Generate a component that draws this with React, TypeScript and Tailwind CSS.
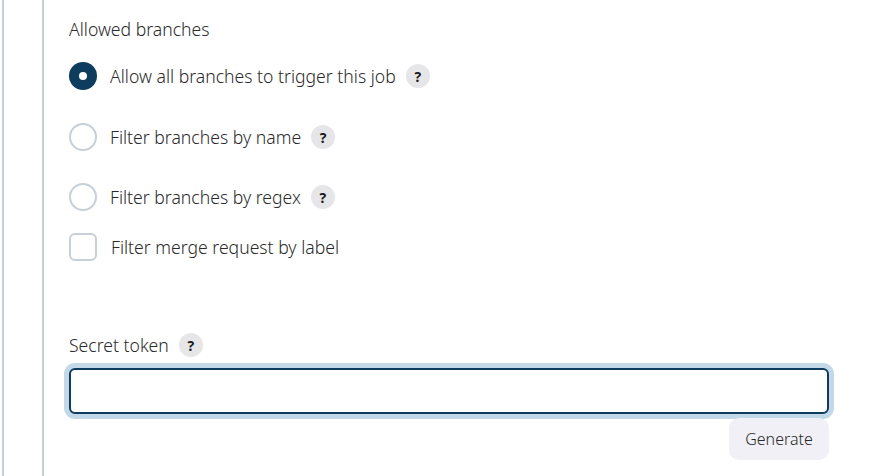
function Help() {
  return (
    <span className="ml-[10px] inline-flex h-[24px] w-[24px] items-center justify-center rounded-full bg-[#e6e6e8] text-[14px] font-bold text-[#1a1a1a]">
      ?
    </span>
  );
}

function Radio({ label, checked, help }: { label: string; checked?: boolean; help?: boolean }) {
  return (
    <div className="flex h-[28px] items-center">
      {checked ? (
        <span className="flex h-[28px] w-[28px] items-center justify-center rounded-full bg-[#0e3c5e]">
          <span className="h-[8px] w-[8px] rounded-full bg-white" />
        </span>
      ) : (
        <span className="h-[28px] w-[28px] rounded-full border-2 border-[#c7d0d6] bg-white" />
      )}
      <span className="ml-[13px]">{label}</span>
      {help && <Help />}
    </div>
  );
}

export default function App() {
  return (
    <div className="flex h-[476px] w-[869px] overflow-hidden bg-white font-['Noto_Sans',sans-serif] text-[17.6px] font-light text-[#2a2a2a]">
      <div className="ml-[2px] w-[2px] bg-[#c8cfd4]" />
      <div className="ml-[38px] w-[2px] bg-[#c8cfd4]" />
      <div className="ml-[25px] flex w-[765px] flex-col pt-[17px]">
        <div className="leading-[24px]">Allowed branches</div>
        <div className="mt-[21px] flex flex-col">
          <Radio label="Allow all branches to trigger this job" checked help />
          <div className="h-[33px]" />
          <Radio label="Filter branches by name" help />
          <div className="h-[32px]" />
          <Radio label="Filter branches by regex" help />
          <div className="mt-[22px] flex h-[28px] items-center">
            <span className="h-[28px] w-[28px] rounded-[6px] border-2 border-[#c7d0d6] bg-white" />
            <span className="ml-[14px]">Filter merge request by label</span>
          </div>
        </div>
        <div className="mt-[71px] flex items-center">
          <span>Secret token</span>
          <Help />
        </div>
        <input
          className="mt-[10px] h-[46px] w-[760px] rounded-[6px] border-2 border-[#0e3c5e] bg-white outline-none ring-[5px] ring-[#c3d9e7]"
          type="text"
        />
        <div className="mt-[4px] flex w-[760px] justify-end">
          <button className="h-[42px] w-[100px] rounded-[10px] bg-[#f0f0f6] text-[16px] font-light text-[#2a2a2a]">
            Generate
          </button>
        </div>
      </div>
    </div>
  );
}
